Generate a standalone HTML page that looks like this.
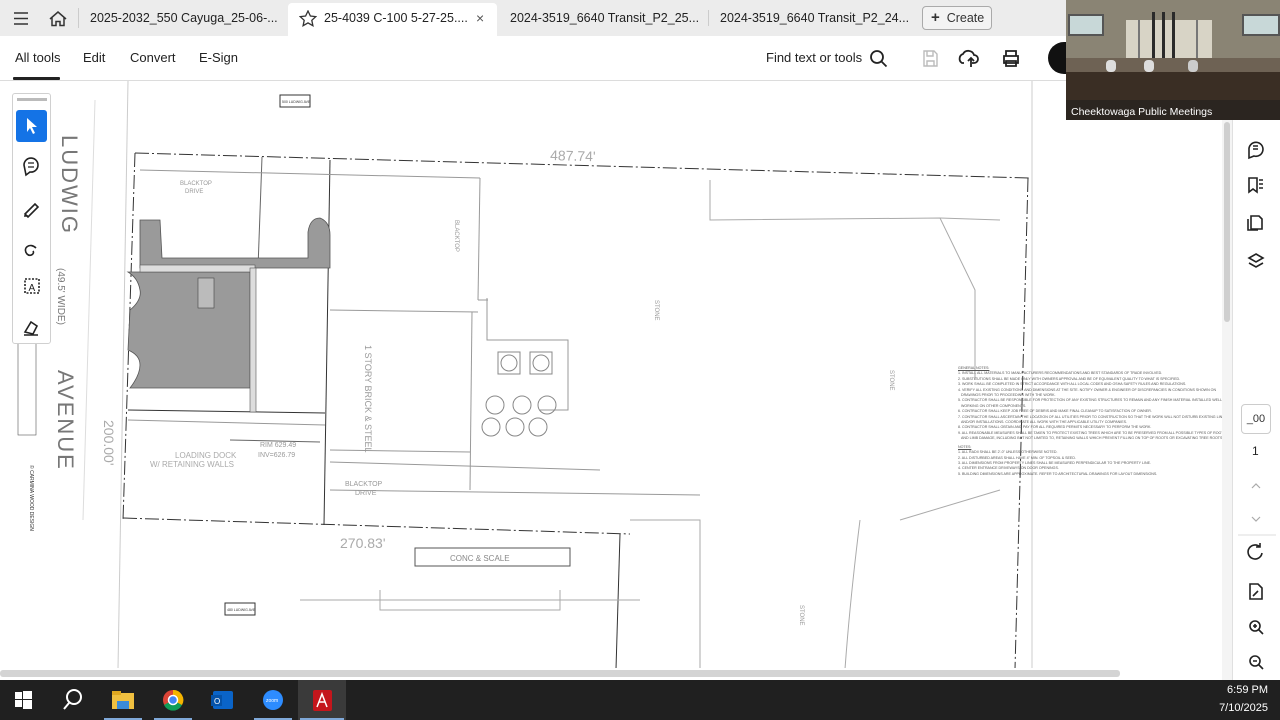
<!DOCTYPE html>
<html><head><meta charset="utf-8">
<style>
*{margin:0;padding:0;box-sizing:border-box}
body{width:1280px;height:720px;overflow:hidden;background:#fff;font-family:"Liberation Sans",sans-serif;position:relative}
.abs{position:absolute}
#tabs{left:0;top:0;width:1280px;height:36px;background:#ececec}
.tab{position:absolute;top:0;height:36px;line-height:36px;font-size:12.5px;color:#222;white-space:nowrap}
#toolbar{left:0;top:36px;width:1280px;height:45px;background:#fff;border-bottom:1px solid #dcdcdc}
.tb{position:absolute;top:50px;font-size:13px;color:#222}
#task{left:0;top:680px;width:1280px;height:40px;background:#202020}
.notes{font-size:3.6px;line-height:5.4px;color:#555;white-space:nowrap}
</style></head><body>

<svg class="abs" style="left:0;top:81px" width="1222" height="588" viewBox="0 81 1222 588">
<g fill="none" stroke="#666" stroke-width="1">
 <line x1="128" y1="81" x2="118" y2="669" stroke="#ccc"/>
 <line x1="1032" y1="81" x2="1032" y2="669" stroke="#ccc"/>
 <line x1="95" y1="100" x2="83" y2="520" stroke="#ddd"/>
 <polyline points="135,153 1030,178" stroke="#333" stroke-dasharray="14,3,2,3"/>
 <polyline points="135,153 123,520" stroke="#333" stroke-dasharray="14,3,2,3"/>
 <polyline points="123,518 630,534" stroke="#333" stroke-dasharray="14,3,2,3"/>
 <polyline points="1028,178 1015,669" stroke="#333" stroke-dasharray="14,3,2,3"/>
 <line x1="620" y1="534" x2="616" y2="669" stroke="#333"/>
 <line x1="262" y1="157" x2="258" y2="268"/>
 <line x1="330" y1="160" x2="324" y2="525" stroke="#333"/>
 <line x1="140" y1="170" x2="480" y2="178" stroke="#999"/>
 <line x1="480" y1="178" x2="478" y2="300" stroke="#999"/>
 <line x1="330" y1="310" x2="478" y2="312" stroke="#999"/>
 <line x1="478" y1="300" x2="488" y2="300" stroke="#999"/>
 <polyline points="487,298 487,340 568,340 568,410 540,410" stroke="#999"/>
 <line x1="330" y1="450" x2="470" y2="452" stroke="#999"/>
 <line x1="472" y1="312" x2="470" y2="490" stroke="#999"/>
 <line x1="330" y1="462" x2="600" y2="470" stroke="#999"/>
 <line x1="330" y1="490" x2="700" y2="495" stroke="#999"/>
 <line x1="128" y1="410" x2="325" y2="413" stroke="#333"/>
 <line x1="128" y1="420" x2="325" y2="425" stroke="#999"/>
 <line x1="230" y1="440" x2="320" y2="442"/>
 <line x1="255" y1="268" x2="255" y2="412" stroke="#333"/>
 <polyline points="710,180 710,220 940,218 975,290 975,380" stroke="#aaa"/>
 <polyline points="940,218 1000,220" stroke="#aaa"/>
 <polyline points="630,520 700,520 700,669" stroke="#aaa"/>
 <polyline points="300,600 640,600" stroke="#aaa"/>
 <polyline points="380,590 380,610 560,610 560,590" stroke="#aaa"/>
 <rect x="415" y="548" width="155" height="18" stroke="#555"/>
 <rect x="498" y="352" width="22" height="22" stroke="#888"/>
 <rect x="530" y="352" width="22" height="22" stroke="#888"/>
 <circle cx="509" cy="363" r="8" stroke="#888"/><circle cx="541" cy="363" r="8" stroke="#888"/>
 <circle cx="495" cy="405" r="9" stroke="#888"/><circle cx="522" cy="405" r="9" stroke="#888"/><circle cx="547" cy="405" r="9" stroke="#888"/>
 <circle cx="491" cy="427" r="9" stroke="#888"/><circle cx="515" cy="427" r="9" stroke="#888"/><circle cx="538" cy="427" r="9" stroke="#888"/>
 <path d="M860 520 Q850 600 845 669" stroke="#aaa"/>
 <path d="M900 520 L1000 490" stroke="#aaa"/>
 <rect x="280" y="95" width="30" height="12" stroke="#333"/>
 <rect x="225" y="603" width="30" height="12" stroke="#333"/>
</g>
<g fill="#9a9a9a" stroke="#555" stroke-width="0.8">
 <path d="M140 220 L160 220 L162 258 L308 258 L308 232 Q310 218 320 218 Q330 222 330 235 L330 268 L140 268 Z"/>
 <path d="M128 272 L250 272 L250 388 L130 388 Q140 375 140 365 Q140 355 128 350 L130 310 Q142 300 140 290 Q138 278 128 272 Z"/>
</g>
<rect x="140" y="265" width="115" height="7" fill="#ddd" stroke="#555" stroke-width="0.6"/>
<rect x="250" y="268" width="6" height="144" fill="#ddd" stroke="#555" stroke-width="0.6"/>
<rect x="198" y="278" width="16" height="30" fill="#bbb" stroke="#444" stroke-width="0.6"/>
<g font-family="Liberation Sans,sans-serif" fill="#777">
 <text transform="translate(62,135) rotate(90)" font-size="22" letter-spacing="2">LUDWIG</text>
 <text transform="translate(58,370) rotate(90)" font-size="22" letter-spacing="2">AVENUE</text>
 <text transform="translate(58,268) rotate(90)" font-size="10">(49.5' WIDE)</text>
 <text transform="translate(104,420) rotate(90)" font-size="14" fill="#aaa">200.00'</text>
 <text x="550" y="160" font-size="14" fill="#aaa" transform="rotate(1.6 550 160)">487.74'</text>
 <text x="340" y="548" font-size="14" fill="#aaa">270.83'</text>
 <text x="450" y="561" font-size="8" fill="#888">CONC &amp; SCALE</text>
 <text x="175" y="458" font-size="8" fill="#aaa">LOADING DOCK</text>
 <text x="150" y="467" font-size="8" fill="#aaa">W/ RETAINING WALLS</text>
 <text x="180" y="185" font-size="6" fill="#999">BLACKTOP</text>
 <text x="185" y="193" font-size="6" fill="#999">DRIVE</text>
 <text x="345" y="486" font-size="7" fill="#999">BLACKTOP</text>
 <text x="355" y="495" font-size="7" fill="#999">DRIVE</text>
 <text x="260" y="447" font-size="7" fill="#999">RIM 629.49</text>
 <text x="258" y="457" font-size="7" fill="#999">INV=626.79</text>
 <text transform="translate(365,345) rotate(90)" font-size="9" fill="#999">1 STORY BRICK &amp; STEEL</text>
 <text transform="translate(30,465) rotate(90)" font-size="5" fill="#333">© CARMINA WOOD DESIGN</text>
 <text x="282" y="103" font-size="3.5" fill="#333">500 LUDWIG AVE</text>
 <text x="227" y="611" font-size="3.5" fill="#333">480 LUDWIG AVE</text>
 <text transform="translate(455,220) rotate(90)" font-size="6" fill="#999">BLACKTOP</text>
 <text transform="translate(655,300) rotate(90)" font-size="6" fill="#999">STONE</text>
 <text transform="translate(890,370) rotate(90)" font-size="6" fill="#999">STONE</text>
 <text transform="translate(800,605) rotate(90)" font-size="6" fill="#999">STONE</text>
</g>
<rect x="18" y="343" width="18" height="92" fill="none" stroke="#555" stroke-width="0.6"/>
</svg>

<div class="abs notes" style="left:958px;top:366px;width:250px">
<div style="text-decoration:underline">GENERAL NOTES:</div>
<div>1. INSTALL ALL MATERIALS TO MANUFACTURERS RECOMMENDATIONS AND BEST STANDARDS OF TRADE INVOLVED.</div>
<div>2. SUBSTITUTIONS SHALL BE MADE ONLY WITH OWNERS APPROVAL AND BE OF EQUIVALENT QUALITY TO WHAT IS SPECIFIED.</div>
<div>3. WORK SHALL BE COMPLETED IN STRICT ACCORDANCE WITH ALL LOCAL CODES AND OSHA SAFETY RULES AND REGULATIONS.</div>
<div>4. VERIFY ALL EXISTING CONDITIONS AND DIMENSIONS AT THE SITE. NOTIFY OWNER &amp; ENGINEER OF DISCREPANCIES IN CONDITIONS SHOWN ON</div>
<div>&nbsp;&nbsp;&nbsp;DRAWINGS PRIOR TO PROCEEDING WITH THE WORK.</div>
<div>5. CONTRACTOR SHALL BE RESPONSIBLE FOR PROTECTION OF ANY EXISTING STRUCTURES TO REMAIN AND ANY FINISH MATERIAL INSTALLED WELL</div>
<div>&nbsp;&nbsp;&nbsp;WORKING ON OTHER COMPONENTS.</div>
<div>6. CONTRACTOR SHALL KEEP JOB FREE OF DEBRIS AND MAKE FINAL CLEANUP TO SATISFACTION OF OWNER.</div>
<div>7. CONTRACTOR SHALL ASCERTAIN THE LOCATION OF ALL UTILITIES PRIOR TO CONSTRUCTION SO THAT THE WORK WILL NOT DISTURB EXISTING LINES</div>
<div>&nbsp;&nbsp;&nbsp;AND/OR INSTALLATIONS. COORDINATE ALL WORK WITH THE APPLICABLE UTILITY COMPANIES.</div>
<div>8. CONTRACTOR SHALL OBTAIN AND PAY FOR ALL REQUIRED PERMITS NECESSARY TO PERFORM THE WORK.</div>
<div>9. ALL REASONABLE MEASURES SHALL BE TAKEN TO PROTECT EXISTING TREES WHICH ARE TO BE PRESERVED FROM ALL POSSIBLE TYPES OF ROOT, TRUNK,</div>
<div>&nbsp;&nbsp;&nbsp;AND LIMB DAMAGE, INCLUDING BUT NOT LIMITED TO, RETAINING WALLS WHICH PREVENT FILLING ON TOP OF ROOTS OR EXCAVATING TREE ROOTS.</div>
<div style="text-decoration:underline;margin-top:3px">NOTES:</div>
<div>1. ALL RADII SHALL BE 2'-0" UNLESS OTHERWISE NOTED.</div>
<div>2. ALL DISTURBED AREAS SHALL HAVE 4" MIN. OF TOPSOIL &amp; SEED.</div>
<div>3. ALL DIMENSIONS FROM PROPERTY LINES SHALL BE MEASURED PERPENDICULAR TO THE PROPERTY LINE.</div>
<div>4. CENTER ENTRANCE DRIVEWAYS ON DOOR OPENINGS.</div>
<div>5. BUILDING DIMENSIONS ARE APPROXIMATE. REFER TO ARCHITECTURAL DRAWINGS FOR LAYOUT DIMENSIONS.</div>
</div>

<div class="abs" style="left:12px;top:93px;width:39px;height:251px;background:#fff;border:1px solid #d0d0d0;border-radius:3px"></div>
<div class="abs" style="left:17px;top:98px;width:30px;height:3px;background:#bbb"></div>
<div class="abs" style="left:16px;top:110px;width:31px;height:32px;background:#1473e6;border-radius:3px"></div>
<svg class="abs" style="left:16px;top:110px" width="31" height="230" viewBox="0 0 31 230">
 <path d="M11 8 L11 22 L14 18 L17 24 L19 23 L16 17 L21 17 Z" fill="#fff"/>
 <g fill="none" stroke="#222" stroke-width="1.6">
  <path d="M8 55 a7 7 0 1 1 6 7 l-4 3 z"/><path d="M12 53 h6 M12 57 h6" stroke-width="1.2"/>
  <path d="M9 104 l10 -10 l3 3 l-10 10 z M8 106 h4"/>
  <path d="M20 138 c-6 -6 -14 0 -9 6 c3 3 8 0 6 -3"/>
  <rect x="9" y="169" width="14" height="14" stroke-dasharray="2,1.5"/>
  <path d="M9 222 l6 -10 l6 4 l-4 8 z M8 225 h14"/>
 </g>
 <text x="12.5" y="181" font-size="10" font-family="Liberation Sans" fill="#222">A</text>
</svg>

<div class="abs" style="left:0;top:668px;width:1222px;height:12px;background:#fff"></div>
<div class="abs" style="left:0;top:670px;width:1120px;height:7px;background:#d4d4d4;border-radius:3px"></div>

<div class="abs" style="left:1222px;top:120px;width:10px;height:560px;background:#f4f4f4"></div>
<div class="abs" style="left:1224px;top:122px;width:6px;height:200px;background:#cfcfcf;border-radius:3px"></div>
<div class="abs" style="left:1232px;top:81px;width:48px;height:599px;background:#fff;border-left:1px solid #e0e0e0"></div>
<svg class="abs" style="left:1232px;top:120px" width="48" height="560" viewBox="0 0 48 560">
 <g fill="none" stroke="#222" stroke-width="1.6">
  <path d="M17 30 a7 7 0 1 1 5 6 l-5 2 z M21 26 h5 M21 29 h5"/>
  <path d="M17 58 v14 l4 -3 l4 3 v-14 z M27 60 h4 M27 64 h4 M27 68 h4"/>
  <path d="M19 96 h8 l3 3 v10 h-11 z M16 99 v11 h10"/>
  <path d="M24 134 l7 4 l-7 4 l-7 -4 z M17 143 l7 4 l7 -4"/>
  <path d="M30 433 a7 7 0 1 1 -2 -6 M28 423 v4 h-4"/>
  <path d="M18 464 h8 l4 4 v11 h-12 z M21 476 l5 -5"/>
  <circle cx="23" cy="506" r="5"/><path d="M27 510 l4 4 M21 506 h4 M23 504 v4"/>
  <circle cx="23" cy="541" r="5"/><path d="M27 545 l4 4 M21 541 h4"/>
  <path d="M20 368 l4 -4 l4 4 M20 397 l4 4 l4 -4" stroke="#aaa" stroke-width="1.2"/>
 </g>
 <line x1="6" y1="415" x2="44" y2="415" stroke="#ddd"/>
</svg>
<div class="abs" style="left:1241px;top:404px;width:30px;height:30px;border:1px solid #ccc;border-radius:4px;font-size:11px;text-align:center;line-height:28px;color:#333">_00</div>
<div class="abs" style="left:1252px;top:444px;font-size:12px;color:#222">1</div>

<div id="tabs" class="abs"></div>
<svg class="abs" style="left:12px;top:10px" width="60" height="18" viewBox="0 0 60 18">
 <path d="M2 3 h14 M2 8.5 h14 M2 14 h14" stroke="#333" stroke-width="1.6"/>
 <path d="M38 9 l8 -7 l8 7 M40 7.5 v8 h4 v-4 h4 v4 h4 v-8" fill="none" stroke="#333" stroke-width="1.5"/>
</svg>
<div class="abs" style="left:78px;top:8px;width:1px;height:20px;background:#ccc"></div>
<div class="tab" style="left:90px">2025-2032_550 Cayuga_25-06-...</div>
<div class="abs" style="left:288px;top:3px;width:209px;height:33px;background:#fff;border-radius:4px 4px 0 0"></div>
<svg class="abs" style="left:299px;top:10px" width="18" height="17" viewBox="0 0 18 17"><path d="M9 1 l2.4 5 l5.4 .6 l-4 3.7 l1.1 5.4 l-4.9 -2.8 l-4.9 2.8 l1.1 -5.4 l-4 -3.7 l5.4 -.6 z" fill="none" stroke="#333" stroke-width="1.3"/></svg>
<div class="tab" style="left:324px">25-4039 C-100 5-27-25....</div>
<div class="tab" style="left:476px;font-size:14px;color:#555">×</div>
<div class="tab" style="left:510px">2024-3519_6640 Transit_P2_25...</div>
<div class="abs" style="left:708px;top:10px;width:1px;height:16px;background:#ccc"></div>
<div class="tab" style="left:720px">2024-3519_6640 Transit_P2_24...</div>
<div class="abs" style="left:922px;top:6px;width:70px;height:24px;border:1px solid #aaa;border-radius:4px;font-size:12.5px;line-height:22px;color:#333;padding-left:8px;background:#f3f3f3"><b style="font-size:15px">+</b>&nbsp; Create</div>

<div id="toolbar" class="abs"></div>
<div class="tb" style="left:15px">All tools</div>
<div class="abs" style="left:13px;top:77px;width:47px;height:3px;background:#222;border-radius:1px"></div>
<div class="tb" style="left:83px">Edit</div>
<div class="tb" style="left:130px">Convert</div>
<div class="tb" style="left:199px">E-Sign</div>
<div class="tb" style="left:766px">Find text or tools</div>
<svg class="abs" style="left:868px;top:48px" width="170" height="22" viewBox="0 0 170 22">
 <g fill="none" stroke="#222" stroke-width="1.8">
  <circle cx="9" cy="9" r="6"/><path d="M13.5 13.5 l5 5"/>
  <path d="M56 3 h10 l3 3 v12 h-13 z M59 3 v5 h6 v-5 M59 18 v-5 h7 v5" stroke="#bbb" stroke-width="1.4"/>
  <path d="M96 15 h-2 a5 5 0 0 1 1 -9 a6 6 0 0 1 11 1 a4 4 0 0 1 0 8 h-2 M103 19 v-9 M100 13 l3 -3 l3 3"/>
  <path d="M138 8 v-5 h10 v5 M136 8 h14 v7 h-14 z M138 13 h10 v5 h-10 z"/>
 </g>
</svg>
<div class="abs" style="left:1048px;top:42px;width:30px;height:32px;background:#111;border-radius:16px 0 0 16px"></div>

<!-- video overlay -->
<div class="abs" style="left:1066px;top:0;width:214px;height:120px;background:#5a5046;overflow:hidden">
 <div class="abs" style="left:0;top:0;width:214px;height:66px;background:#8a8474"></div>
 <div class="abs" style="left:2px;top:14px;width:36px;height:22px;background:#c8d8d8;border:2px solid #555"></div>
 <div class="abs" style="left:176px;top:14px;width:38px;height:22px;background:#c8d8d8;border:2px solid #555"></div>
 <div class="abs" style="left:60px;top:20px;width:86px;height:42px;background:#d8d4c6"></div>
 <div class="abs" style="left:72px;top:20px;width:2px;height:42px;background:#777"></div>
 <div class="abs" style="left:130px;top:20px;width:2px;height:42px;background:#777"></div>
 <div class="abs" style="left:86px;top:12px;width:3px;height:56px;background:#2a2a2a"></div>
 <div class="abs" style="left:96px;top:12px;width:3px;height:56px;background:#2a2a2a"></div>
 <div class="abs" style="left:106px;top:12px;width:3px;height:56px;background:#2a2a2a"></div>
 <div class="abs" style="left:0;top:58px;width:214px;height:14px;background:#6e6254"></div>
 <div class="abs" style="left:40px;top:60px;width:10px;height:12px;background:#ddd;border-radius:4px"></div>
 <div class="abs" style="left:78px;top:60px;width:10px;height:12px;background:#ddd;border-radius:4px"></div>
 <div class="abs" style="left:122px;top:60px;width:10px;height:12px;background:#ccc;border-radius:4px"></div>
 <div class="abs" style="left:0;top:72px;width:214px;height:28px;background:#3a2e24"></div>
 <div class="abs" style="left:0;top:100px;width:214px;height:20px;background:#2b2520"></div>
 <div class="abs" style="left:5px;top:106px;font-size:10.5px;color:#fff;white-space:nowrap">Cheektowaga Public Meetings</div>
</div>

<div id="task" class="abs"></div>
<svg class="abs" style="left:0;top:680px" width="360" height="40" viewBox="0 0 360 40">
 <g fill="#fff"><rect x="15" y="12" width="7" height="7"/><rect x="23" y="11" width="9" height="8"/><rect x="15" y="20" width="7" height="7"/><rect x="23" y="20" width="9" height="9"/></g>
 <circle cx="74" cy="17" r="7" fill="none" stroke="#fff" stroke-width="2"/><path d="M69 23 l-5 6" stroke="#fff" stroke-width="2"/>
 <rect x="112" y="13" width="22" height="16" fill="#f0c040"/><rect x="112" y="11" width="9" height="4" fill="#e0a820"/><rect x="117" y="21" width="12" height="8" fill="#3b8bd8"/>
 <circle cx="173" cy="20" r="10" fill="#db4437"/><path d="M173 20 L164 25 A10 10 0 0 0 182 25 Z" fill="#0f9d58"/><path d="M173 20 L182 25 A10 10 0 0 0 173 10 Z" fill="#f4b400"/><circle cx="173" cy="20" r="4.5" fill="#4285f4" stroke="#fff" stroke-width="1.5"/>
 <rect x="213" y="11" width="20" height="18" rx="2" fill="#0a64c8"/><rect x="211" y="15" width="11" height="11" fill="#0552a8"/><text x="214" y="24" font-size="8" fill="#fff" font-family="Liberation Sans">O</text>
 <circle cx="273" cy="20" r="10" fill="#2d8cff"/><text x="266" y="22" font-size="5" fill="#fff" font-family="Liberation Sans">zoom</text>
 <rect x="298" y="0" width="48" height="40" fill="#3a3a3a"/>
 <rect x="313" y="10" width="19" height="21" rx="2" fill="#c4161c"/><path d="M317 27 l5 -13 l5 13 M319 22 h6" stroke="#fff" stroke-width="1.5" fill="none"/>
 <g fill="#7fa8d8"><rect x="104" y="38" width="38" height="2"/><rect x="154" y="38" width="38" height="2"/><rect x="254" y="38" width="38" height="2"/><rect x="300" y="38" width="44" height="2"/></g>
</svg>
<div class="abs" style="left:1222px;top:684px;font-size:11px;color:#fff;text-align:right;width:46px">6:59 PM</div>
<div class="abs" style="left:1214px;top:702px;font-size:11px;color:#fff;text-align:right;width:54px">7/10/2025</div>
</body></html>
